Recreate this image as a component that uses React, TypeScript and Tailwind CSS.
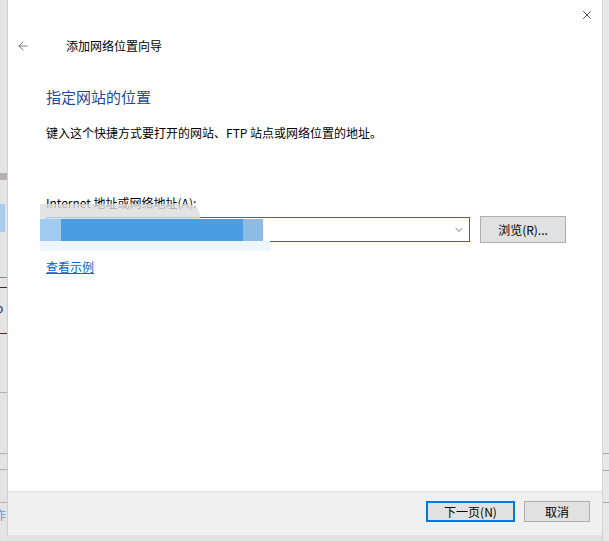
import { ChevronDown, X, ArrowLeft } from 'lucide-react';

const font = { fontFamily: '"Microsoft YaHei UI", "Noto Sans CJK SC", "Noto Sans", sans-serif' };

// strip of the window that sits behind the dialog, on the left
function BackWindowLeft() {
  return (
    <div className="w-[7px] h-[541px] bg-[#e4e4e4] overflow-hidden flex flex-col">
      <div className="mt-[173px] w-[7px] h-[7px] bg-[#b8b0b0]" />
      <div className="mt-[24px] w-[5px] h-[28px] bg-[#a9cdef]" />
      <div className="mt-[45px] w-[7px] h-px bg-[#8a8a8a]" />
      <div className="mt-[9px] w-[7px] h-px bg-[#5a2020]" />
      <div className="mt-[14px] -ml-[4px] h-[14px] text-[12px] leading-none text-[#1f1f5f]">o</div>
      <div className="mt-[17px] w-[7px] h-px bg-[#5a2020]" />
      <div className="mt-[58px] w-[7px] h-px bg-[#b0b0b0]" />
      <div className="mt-[60px] w-[7px] h-px bg-[#b0b0b0]" />
      <div className="mt-[15px] w-[7px] h-px bg-[#b0b0b0]" />
      <div className="mt-[32px] w-[7px] h-px bg-[#b0b0b0]" />
      <div className="mt-[6px] -ml-[6px] text-[12px] leading-none text-[#5a9de0]">作</div>
    </div>
  );
}

function BackWindowRight() {
  return (
    <div className="w-[7px] h-[541px] bg-[#e8e8e8] border-l border-[#d4d4d4] flex flex-col">
      <div className="mt-[453px] h-px bg-[#a8a8a8]" />
      <div className="mt-[16px] h-px bg-[#a8a8a8]" />
      <div className="mt-[31px] h-px bg-[#a8a8a8]" />
    </div>
  );
}

export default function App() {
  return (
    <div className="w-[609px] h-[541px] flex bg-[#e6e6e6] overflow-hidden text-[#000]" style={font}>
      <BackWindowLeft />
      <div className="flex flex-col">
        <div className="w-[595px] h-[535px] bg-white flex flex-col border-l border-[#d0d0d0]">
          {/* title bar */}
          <div className="h-[30px] flex justify-end">
            <button className="w-[30px] h-[30px] flex items-center justify-center text-[#000]">
              <X className="w-[14px] h-[14px]" strokeWidth={1.2} />
            </button>
          </div>
          <div className="h-[32px] flex items-center pl-[8px]">
            <ArrowLeft className="w-[14px] h-[14px] text-[#666]" strokeWidth={1.5} />
            <span className="ml-[36px] text-[12px] text-[#000]">添加网络位置向导</span>
          </div>

          <div className="flex-1 pl-[38px] pr-[36px]">
            <div className="mt-[25px] text-[15px] text-[#1c4a9b] leading-[20px]">指定网站的位置</div>
            <div className="mt-[18px] text-[12px] leading-[16px]">
              键入这个快捷方式要打开的网站、FTP 站点或网络位置的地址。
            </div>

            <div className="mt-[54px] text-[12px] leading-[16px]">Internet 地址或网络地址(A):</div>
            <div className="mt-[5px] flex items-center">
              <div className="relative w-[424px] h-[25px] border border-[#0078d7] flex items-center justify-end pr-[4px]">
                <ChevronDown className="w-[12px] h-[12px] text-[#444]" strokeWidth={1.5} />
                {/* redaction scribble over the typed address */}
                <div className="absolute -left-[7px] -top-[14px] w-[160px] h-[20px] bg-[#dcdcdc] opacity-80 rounded-tr-[12px]" />
                <div className="absolute left-[14px] top-[1px] w-[182px] h-[22px] bg-[#4a9de3]" />
                <div className="absolute -left-[7px] top-[1px] w-[21px] h-[22px] bg-[#9ecbef]" />
                <div className="absolute left-[196px] top-[1px] w-[20px] h-[22px] bg-[#8cbbe4]" />
                <div className="absolute -left-[7px] top-[23px] w-[230px] h-[10px] bg-[#eef5fb]" />
              </div>
              <button className="ml-[10px] w-[86px] h-[27px] bg-[#e1e1e1] border border-[#adadad] text-[12px]">
                浏览(R)...
              </button>
            </div>

            <div className="mt-[10px]">
              <a className="text-[12px] text-[#0066cc] underline leading-[16px]">查看示例</a>
            </div>
          </div>

          {/* footer */}
          <div className="h-[44px] bg-[#f0f0f0] border-t border-[#dfdfdf] flex items-start justify-end pt-[9px] pr-[12px] gap-[9px]">
            <button className="w-[89px] h-[21px] bg-[#e1e1e1] border-2 border-[#0078d7] text-[12px] leading-none">
              下一页(N)
            </button>
            <button className="w-[66px] h-[21px] bg-[#e1e1e1] border border-[#adadad] text-[12px] leading-none">
              取消
            </button>
          </div>
        </div>
        <div className="flex-1 bg-[#e2e2e2]" />
      </div>
      <BackWindowRight />
    </div>
  );
}
